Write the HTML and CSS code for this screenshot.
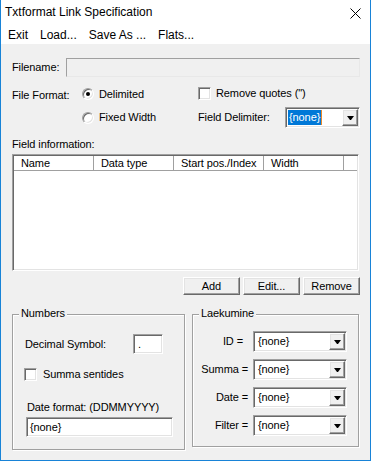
FILE: index.html
```html
<!DOCTYPE html>
<html lang="en">
<head>
    <meta charset="UTF-8">
    <meta name="viewport" content="width=device-width, initial-scale=1.0">
    <title>Txtformat Link Specification</title>
    <link rel="stylesheet" href="styles.css">
</head>
<body>
<div class="window">
    <div class="titlebar">
        <span class="title">Txtformat Link Specification</span>
        <svg class="close" width="11" height="11" viewBox="0 0 11 11">
            <path d="M0.5 0.5L10.5 10.5M10.5 0.5L0.5 10.5" stroke="#000" stroke-width="1" fill="none"/>
        </svg>
    </div>
    <div class="menubar">
        <span class="menu-item">Exit</span>
        <span class="menu-item">Load...</span>
        <span class="menu-item">Save As ...</span>
        <span class="menu-item">Flats...</span>
    </div>
    <div class="client">
        <div class="filename-row">
            <span class="filename-label">Filename:</span>
            <div class="edit-disabled"></div>
        </div>

        <div class="format">
            <span class="format-label">File Format:</span>
            <div class="radio-row"><span class="radio checked"></span>Delimited</div>
            <div class="check-row quotes-row"><span class="checkbox"></span>Remove quotes (")</div>
            <div class="radio-row"><span class="radio"></span>Fixed Width</div>
            <div class="delim-row">
                <span class="delim-label">Field Delimiter:</span>
                <div class="combo delim-combo">
                    <span class="combo-text"><span class="selected">{none}</span></span>
                    <span class="combo-btn"><span class="arrow"></span></span>
                </div>
            </div>
        </div>

        <div class="fieldinfo-label">Field information:</div>
        <div class="listview">
            <div class="list-header">
                <div class="col col-name">Name</div>
                <div class="col col-type">Data type</div>
                <div class="col col-start">Start pos./Index</div>
                <div class="col col-width">Width</div>
                <div class="col col-fill"></div>
            </div>
        </div>

        <div class="buttons">
            <div class="button">Add</div>
            <div class="button">Edit...</div>
            <div class="button">Remove</div>
        </div>

        <div class="groups">
            <div class="group numbers">
                <span class="legend">Numbers</span>
                <div class="decimal-row">
                    <span class="decimal-label">Decimal Symbol:</span>
                    <div class="edit decimal-edit">.</div>
                </div>
                <div class="check-row sentides-row"><span class="checkbox"></span>Summa sentides</div>
                <div class="date-label">Date format: (DDMMYYYY)</div>
                <div class="edit date-edit">{none}</div>
            </div>
            <div class="group laekumine">
                <span class="legend">Laekumine</span>
                <div class="field-row">
                    <span class="field-label id-label">ID =</span>
                    <div class="combo field-combo">
                        <span class="combo-text">{none}</span>
                        <span class="combo-btn"><span class="arrow"></span></span>
                    </div>
                </div>
                <div class="field-row">
                    <span class="field-label">Summa =</span>
                    <div class="combo field-combo">
                        <span class="combo-text">{none}</span>
                        <span class="combo-btn"><span class="arrow"></span></span>
                    </div>
                </div>
                <div class="field-row">
                    <span class="field-label">Date =</span>
                    <div class="combo field-combo">
                        <span class="combo-text">{none}</span>
                        <span class="combo-btn"><span class="arrow"></span></span>
                    </div>
                </div>
                <div class="field-row">
                    <span class="field-label">Filter =</span>
                    <div class="combo field-combo">
                        <span class="combo-text">{none}</span>
                        <span class="combo-btn"><span class="arrow"></span></span>
                    </div>
                </div>
            </div>
        </div>
    </div>
</div>
</body>
</html>
```

FILE: styles.css
```css
*{
    margin: 0;
    padding: 0;
}
body{
    font-family: "Liberation Sans", Arial, sans-serif;
    font-size: 11px;
    line-height: 13px;
    color: #000;
    background: #fff;
}
.window{
    display: flex;
    flex-direction: column;
    width: 371px;
    height: 461px;
    box-sizing: border-box;
    border: 1px solid #1883d7;
    border-top: none;
}
.titlebar{
    display: flex;
    justify-content: space-between;
    align-items: flex-start;
    height: 24px;
    padding-left: 4px;
    background: #fff;
    font-size: 12px;
    line-height: 14px;
}
.title{
    margin-top: 5px;
}
.close{
    display: block;
    margin-top: 8px;
    margin-right: 9px;
}
.menubar{
    display: flex;
    height: 20px;
    box-sizing: border-box;
    padding-top: 4px;
    padding-left: 1px;
    background: #fff;
    font-size: 12px;
    line-height: 14px;
}
.menu-item{
    padding: 0 6px;
}
.client{
    flex: 1;
    display: flex;
    flex-direction: column;
    padding: 14px 10px 0 11px;
    background: #f0f0f0;
    letter-spacing: -0.1px;
}

/* sunken / raised edges */
.edit, .listview, .combo, .checkbox{
    box-sizing: border-box;
    background: #fff;
    border: 1px solid;
    border-color: #a0a0a0 #fff #fff #a0a0a0;
    box-shadow: inset 1px 1px #696969, inset -1px -1px #e3e3e3;
}
.button, .combo-btn{
    box-sizing: border-box;
    background: #f0f0f0;
    border: 1px solid;
    border-color: #fff #696969 #696969 #fff;
    box-shadow: inset -1px -1px #a0a0a0, inset 1px 1px #e3e3e3;
}

.filename-row{
    display: flex;
    align-items: center;
    height: 19px;
}
.filename-label{
    width: 54px;
}
.edit-disabled{
    flex: 1;
    height: 19px;
    box-sizing: border-box;
    border: 1px solid;
    border-color: #a0a0a0 #e8e8e8 #e8e8e8 #a0a0a0;
}

.format{
    display: grid;
    grid-template-columns: 70px 116px 1fr;
    grid-template-rows: 20px 23px;
    row-gap: 2px;
    margin-top: 7px;
}
.format-label{
    grid-column: 1;
    grid-row: 1;
    align-self: center;
    padding-top: 2px;
}
.radio-row{
    grid-column: 2;
}
.quotes-row, .delim-row{
    grid-column: 3;
}
.radio-row, .check-row, .delim-row{
    display: flex;
    align-items: center;
}
.radio{
    position: relative;
    width: 12px;
    height: 12px;
    box-sizing: border-box;
    margin-right: 5px;
    border-radius: 50%;
    background: #fff;
    border: 1px solid;
    border-color: #a0a0a0 #fff #fff #a0a0a0;
    box-shadow: inset 1px 1px #696969, inset -1px -1px #e3e3e3;
}
.radio.checked::after{
    content: "";
    position: absolute;
    left: 3px;
    top: 3px;
    width: 4px;
    height: 4px;
    border-radius: 50%;
    background: #000;
}
.quotes-row{
    margin-top: -2px;
}
.checkbox{
    width: 13px;
    height: 13px;
    margin-right: 5px;
}
.delim-label{
    width: 87px;
}
.combo{
    display: flex;
    padding: 1px;
}
.delim-combo{
    width: 75px;
    height: 21px;
}
.combo-text{
    flex: 1;
    display: flex;
    align-items: center;
    padding-left: 3px;
}
.delim-combo .combo-text{
    padding-left: 1px;
}
.selected{
    padding: 1px 1px;
    background: #0078d7;
    color: #fff;
    border-right: 1px solid #e8882a;
}
.combo-btn{
    display: flex;
    align-items: center;
    justify-content: center;
    width: 16px;
}
.arrow{
    width: 1px;
    height: 0;
    border-left: 3px solid transparent;
    border-right: 3px solid transparent;
    border-top: 4px solid #000;
}

.fieldinfo-label{
    margin-top: 9px;
}
.listview{
    width: 347px;
    height: 117px;
    margin-top: 3px;
    padding: 1px;
}
.list-header{
    display: flex;
    height: 15px;
}
.col{
    box-sizing: border-box;
    height: 15px;
    padding-left: 7px;
    padding-top: 1px;
    background: #fff;
    border-right: 1px solid #a0a0a0;
    border-bottom: 1px solid #a0a0a0;
    box-shadow: inset 1px 0 #fff;
}
.col-name{ width: 80px; }
.col-type{ width: 80px; }
.col-start{ width: 90px; }
.col-width{ width: 80px; }
.col-fill{ flex: 1; border-right: none; }

.buttons{
    display: flex;
    justify-content: flex-end;
    gap: 3px;
    margin-top: 6px;
}
.button{
    width: 57px;
    height: 18px;
    line-height: 16px;
    text-align: center;
}

.groups{
    display: flex;
    align-items: flex-start;
    gap: 7px;
    margin-top: 19px;
}
.group{
    position: relative;
    box-sizing: border-box;
    border: 1px solid #a0a0a0;
    box-shadow: 1px 1px 0 #fff, inset 1px 1px 0 #fff;
}
.legend{
    position: absolute;
    top: -8px;
    left: 6px;
    padding: 0 2px;
    background: #f0f0f0;
}
.numbers{
    width: 173px;
    height: 136px;
    padding: 19px 0 0 12px;
}
.laekumine{
    display: flex;
    flex-direction: column;
    gap: 7px;
    width: 167px;
    height: 133px;
    padding-top: 16px;
}
.decimal-row{
    display: flex;
    align-items: center;
    height: 20px;
}
.decimal-label{
    width: 108px;
}
.decimal-edit{
    width: 30px;
    height: 20px;
    padding: 3px 0 0 4px;
}
.sentides-row{
    margin-top: 14px;
    margin-left: -1px;
    height: 13px;
}
.sentides-row .checkbox{
    margin-right: 6px;
}
.date-label{
    margin-top: 20px;
    margin-left: 2px;
}
.date-edit{
    width: 147px;
    height: 20px;
    margin-top: 3px;
    margin-left: 1px;
    padding: 3px 0 0 3px;
}
.field-row{
    display: flex;
    align-items: center;
    height: 21px;
}
.field-label{
    width: 60px;
    box-sizing: border-box;
    padding-right: 5px;
    text-align: right;
}
.id-label{
    padding-right: 10px;
}
.field-combo{
    width: 94px;
    height: 21px;
}
```
